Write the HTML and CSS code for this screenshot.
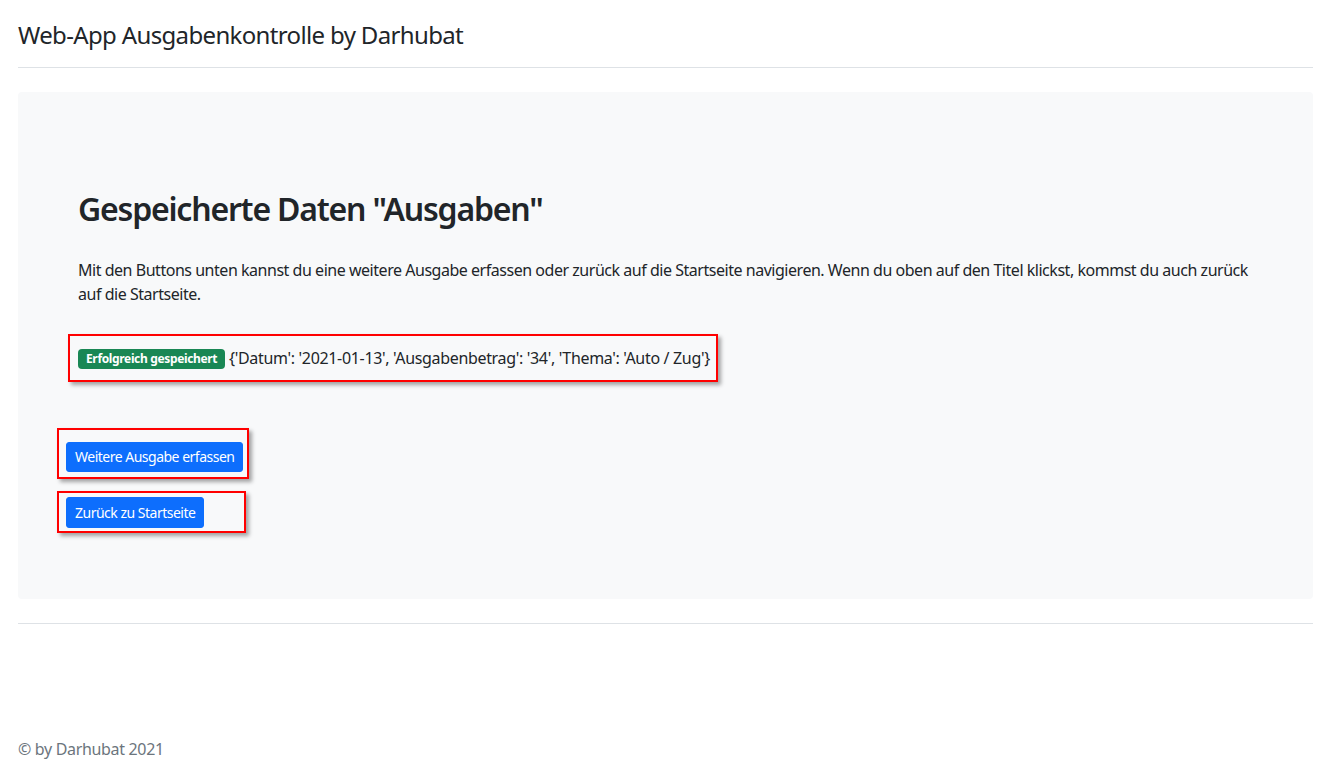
FILE: index.html
```html
<!DOCTYPE html>
<html lang="de">
<head>
<meta charset="utf-8">
<title>Web-App Ausgabenkontrolle</title>
<link rel="stylesheet" href="styles.css">
</head>
<body>
<div class="page">
  <header class="site-header">
    <a class="brand" href="#">Web-App Ausgabenkontrolle by Darhubat</a>
  </header>
  <main class="hero">
    <div class="hero-inner">
      <h2 class="hero-title">Gespeicherte Daten "Ausgaben"</h2>
      <p class="hero-text">Mit den Buttons unten kannst du eine weitere Ausgabe erfassen oder zurück auf die Startseite navigieren. Wenn du oben auf den Titel klickst, kommst du auch zurück auf die Startseite.</p>
      <div class="mark mark-result"><span class="badge">Erfolgreich gespeichert</span> {'Datum': '2021-01-13', 'Ausgabenbetrag': '34', 'Thema': 'Auto / Zug'}</div>
    </div>
    <div class="actions">
      <div class="mark mark-btn1"><a class="btn" href="#">Weitere Ausgabe erfassen</a></div>
      <div class="mark mark-btn2"><a class="btn" href="#">Zurück zu Startseite</a></div>
    </div>
  </main>
  <footer class="site-footer">
    <p class="copy">© by Darhubat 2021</p>
  </footer>
</div>
</body>
</html>
```
FILE: styles.css
```css
* { box-sizing: border-box; }
html, body { margin: 0; padding: 0; background: #fff; }
body {
  font-family: "Noto Sans", "Open Sans", sans-serif;
  font-size: 16px;
  line-height: 1.5;
  letter-spacing: -0.33px;
  color: #212529;
}
.page { padding: 0 7px 0 18px; }
.site-header {
  padding: 17px 0 14px;
  border-bottom: 1px solid #dee2e6;
  margin-bottom: 24px;
}
.brand {
  font-size: 24px;
  line-height: 36px;
  letter-spacing: -0.65px;
  color: #212529;
  text-decoration: none;
}
.hero {
  background: #f8f9fa;
  border-radius: 4px;
  padding: 48px 48px 48px;
}
.hero-inner { padding: 50px 12px 0; }
.hero-title {
  margin: 0 0 30px;
  font-size: 32px;
  line-height: 1.2;
  font-weight: 600;
  letter-spacing: -1.2px;
}
.hero-text { margin: 0 0 28px; letter-spacing: -0.47px; }
.mark {
  border: 2px solid #ff0000;
  box-shadow: 3px 3px 4px rgba(0,0,0,0.35);
  background: transparent;
}
.mark-result {
  display: inline-block;
  margin-left: -10px;
  padding: 11px 6px 11px 8px;
  line-height: 22px;
}
.badge {
  display: inline-block;
  background: #198754;
  color: #fff;
  font-size: 12px;
  font-weight: 700;
  line-height: 1;
  letter-spacing: -0.35px;
  padding: 4px 8px 4px 8px;
  border-radius: 4px;
  vertical-align: 1px;
}
.actions {
  display: flex;
  flex-direction: column;
  align-items: flex-start;
  gap: 12px;
  margin: 46px 0 18px -9px;
}
.mark-btn1 { padding: 12px 4px 5px 7px; }
.mark-btn2 { padding: 4px 40px 3px 7px; }
.btn {
  display: inline-block;
  background: #0d6efd;
  color: #fff;
  text-decoration: none;
  font-size: 14px;
  line-height: 21px;
  letter-spacing: -0.5px;
  padding: 4px 8px;
  border: 1px solid #0d6efd;
  border-radius: 3px;
}
.mark-btn1 .btn { height: 30px; padding-top: 3px; }
.site-footer {
  margin-top: 24px;
  border-top: 1px solid #dee2e6;
  padding-top: 113px;
}
.copy { margin: 0; color: #6c757d; }
```
